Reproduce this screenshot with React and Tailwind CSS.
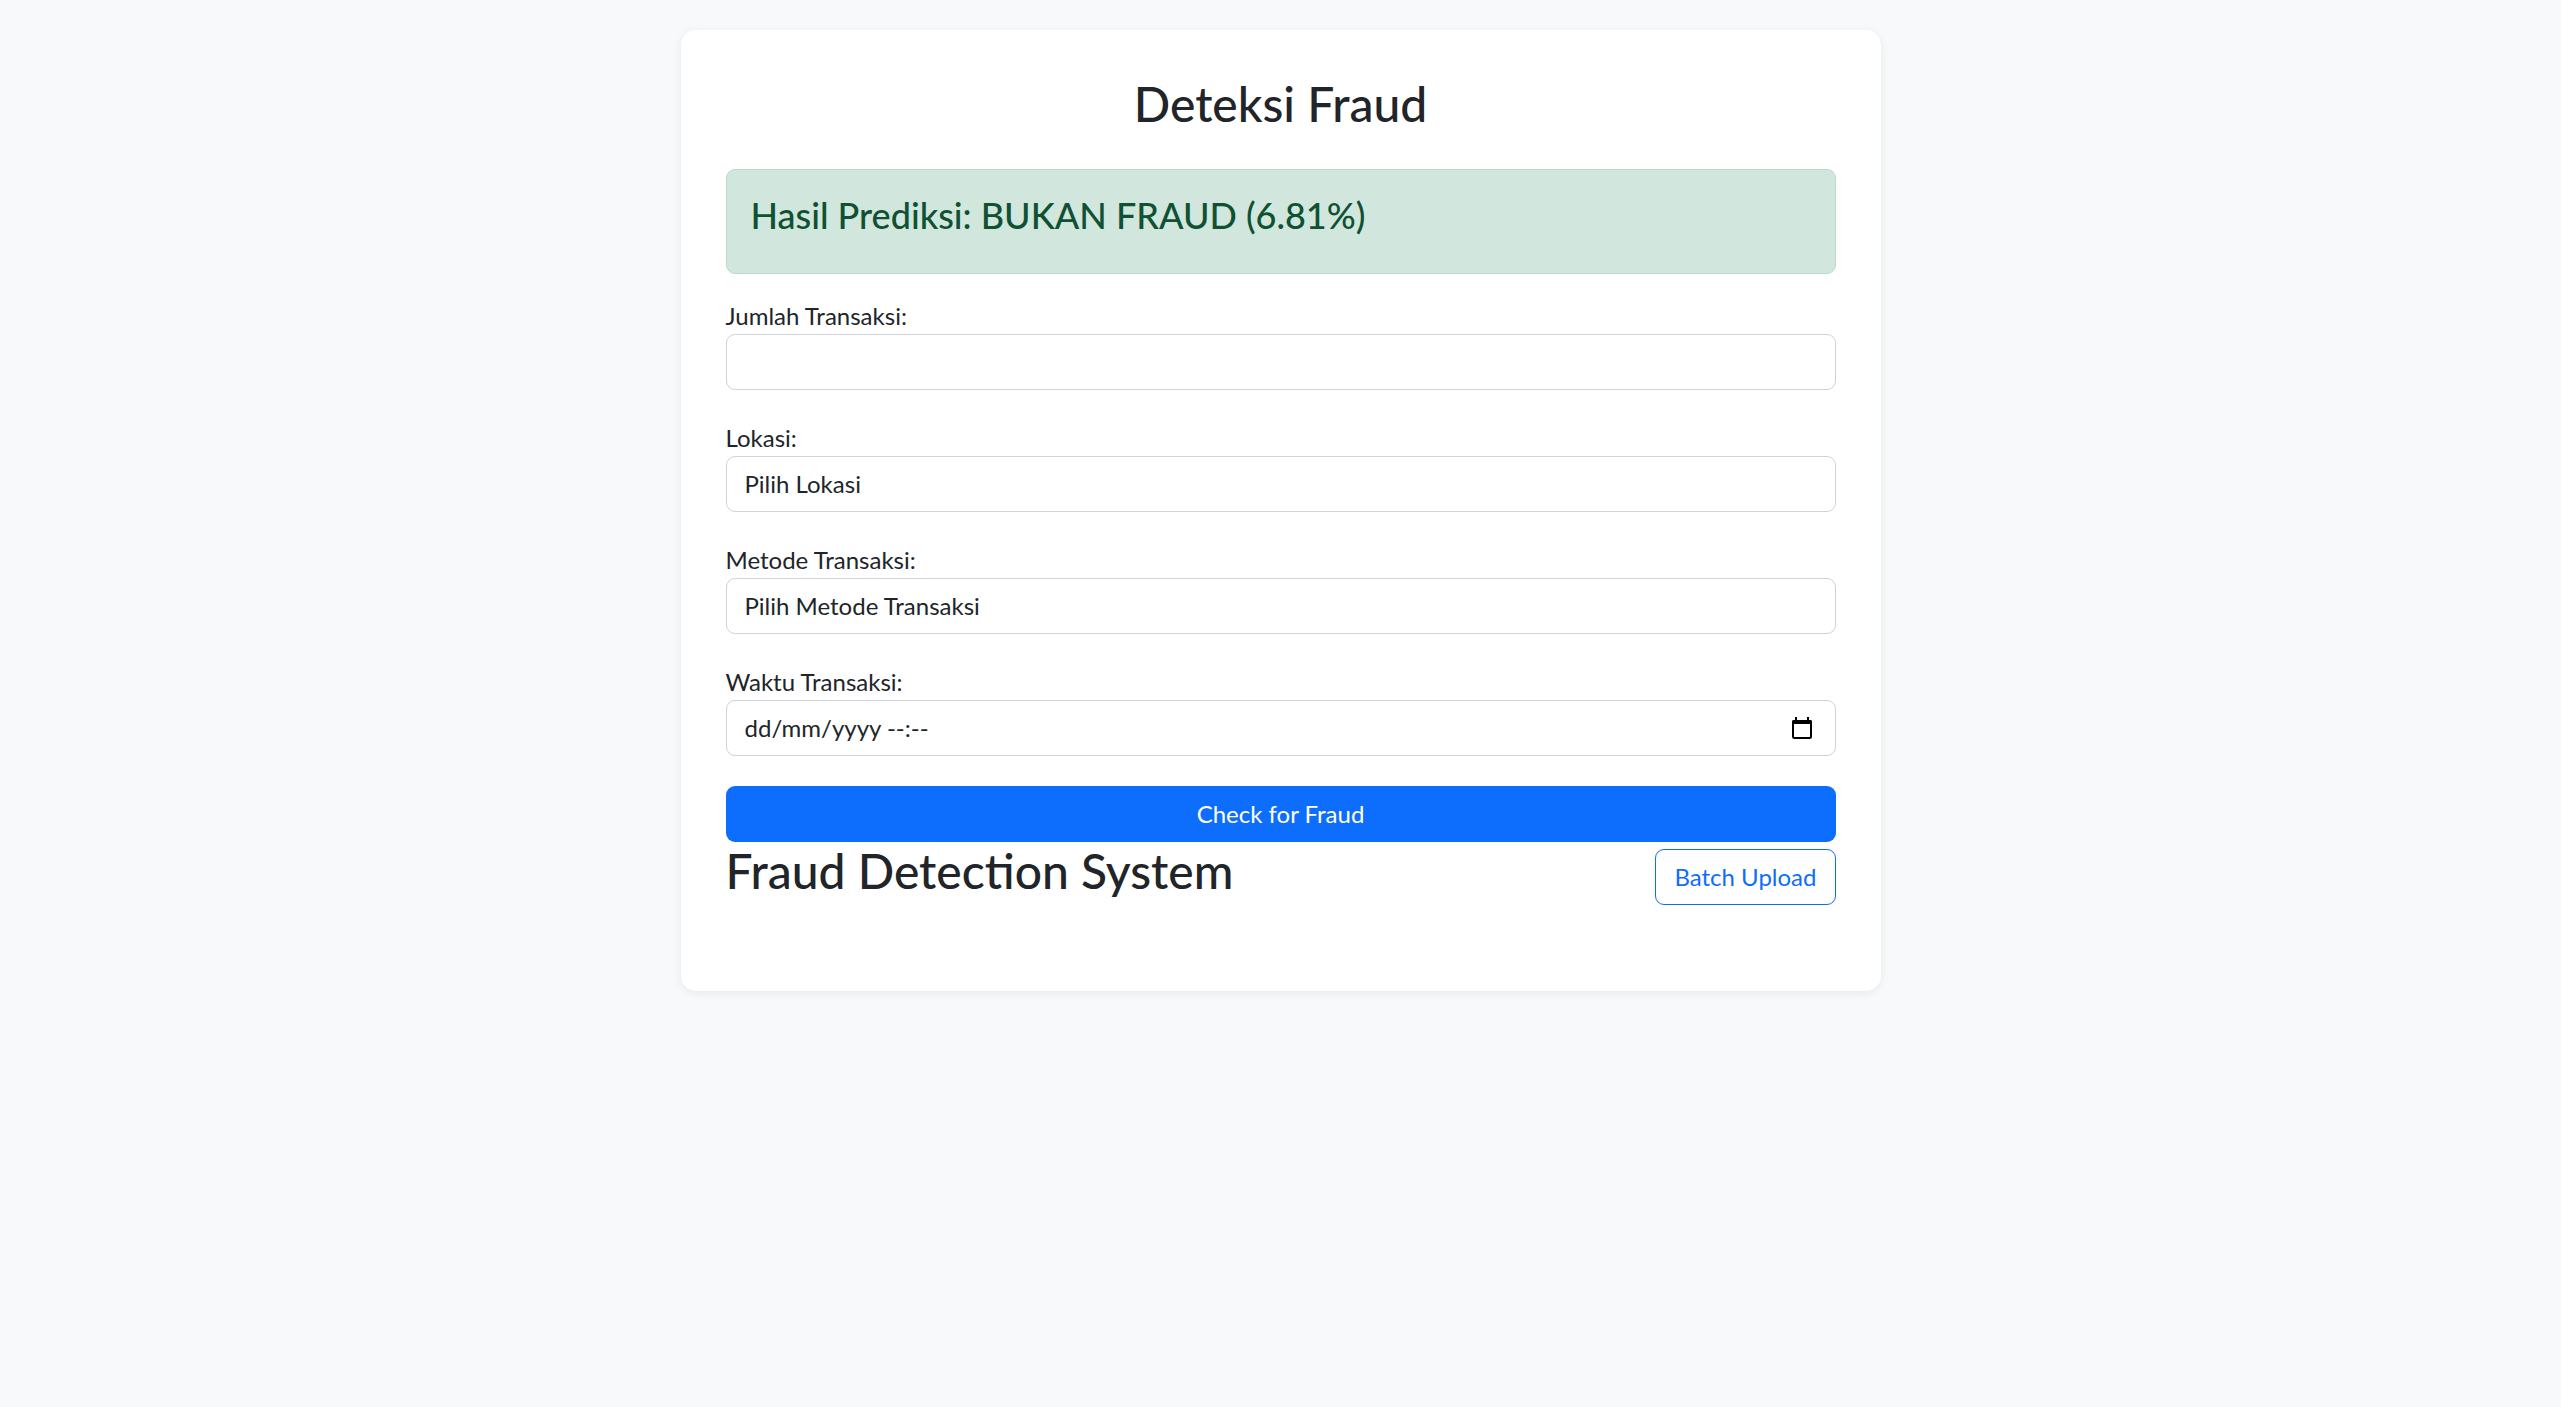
import React from "react";

function Field({ label, children }) {
  return (
    <div className="mb-[30px]">
      <label className="block text-[24px] leading-[36px] text-[#212529]">{label}</label>
      {children}
    </div>
  );
}

function Box({ children }) {
  return (
    <div className="flex h-[56px] w-full items-center rounded-[9px] border border-[#ced4da] bg-white px-[18px] text-[24px] text-[#212529]">
      {children}
    </div>
  );
}

function CalendarIcon() {
  return (
    <svg width="20" height="22" viewBox="0 0 20 22" className="block">
      <rect x="3" y="0" width="2" height="5" fill="#000" />
      <rect x="15" y="0" width="2" height="5" fill="#000" />
      <rect x="1" y="4" width="18" height="17" rx="1.5" fill="none" stroke="#000" strokeWidth="2" />
      <rect x="0" y="3" width="20" height="4" rx="1.5" fill="#000" />
    </svg>
  );
}

export default function App() {
  return (
    <div
      className="min-h-screen bg-[#f8f9fa] pt-[30px]"
      style={{ fontFamily: "Lato, 'Open Sans', sans-serif" }}
    >
      <div className="mx-auto w-[1200px] rounded-[15px] bg-white px-[45px] pb-[86px] pt-[45px] shadow-[0_2px_10px_rgba(0,0,0,0.07)]">
        <h2 className="mb-[36px] text-center text-[48px] font-medium leading-[1.2] text-[#212529]">
          Deteksi Fraud
        </h2>

        <div className="mb-[24px] rounded-[9px] border border-[#badbcc] bg-[#d1e7dd] p-[24px]">
          <h4 className="mb-[12px] text-[36px] font-medium leading-[1.2] text-[#0f5132]">
            Hasil Prediksi: BUKAN FRAUD (6.81%)
          </h4>
        </div>

        <Field label="Jumlah Transaksi:">
          <Box />
        </Field>
        <Field label="Lokasi:">
          <Box>Pilih Lokasi</Box>
        </Field>
        <Field label="Metode Transaksi:">
          <Box>Pilih Metode Transaksi</Box>
        </Field>
        <Field label="Waktu Transaksi:">
          <div className="flex h-[56px] w-full items-center justify-between rounded-[9px] border border-[#ced4da] bg-white pl-[18px] pr-[23px] text-[24px] text-[#212529]">
            <span>dd/mm/yyyy --:--</span>
            <CalendarIcon />
          </div>
        </Field>

        <button className="flex h-[56px] w-full items-center justify-center rounded-[9px] bg-[#0d6efd] text-[24px] text-white">
          Check for Fraud
        </button>

        <div className="flex items-start justify-between">
          <h2 className="text-[48px] font-medium leading-[1.2] text-[#212529]">
            Fraud Detection System
          </h2>
          <button className="mt-[7px] flex h-[56px] items-center rounded-[9px] border border-[#0d6efd] bg-white px-[18px] text-[24px] text-[#0d6efd]">
            Batch Upload
          </button>
        </div>
      </div>
    </div>
  );
}
